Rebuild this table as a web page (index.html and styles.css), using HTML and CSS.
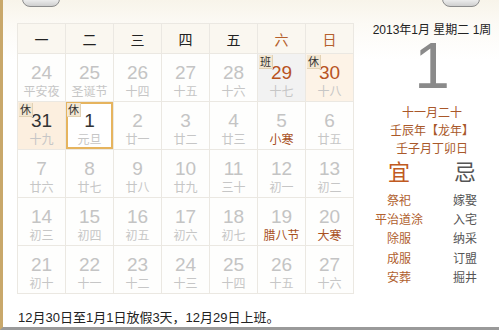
FILE: index.html
```html
<!DOCTYPE html>
<html lang="zh">
<head>
<meta charset="utf-8">
<link rel="stylesheet" href="styles.css">
</head>
<body>
<div class="sheet">
  <div class="ring ring-left"></div>
  <div class="ring ring-right"></div>
  <div class="main">
    <div class="cal">
      <div class="grid">
        <div class="wk">一</div><div class="wk">二</div><div class="wk">三</div><div class="wk">四</div><div class="wk">五</div><div class="wk we">六</div><div class="wk we">日</div>

        <div class="c"><b>24</b><i>平安夜</i></div>
        <div class="c"><b>25</b><i>圣诞节</i></div>
        <div class="c"><b>26</b><i>十四</i></div>
        <div class="c"><b>27</b><i>十五</i></div>
        <div class="c"><b>28</b><i>十六</i></div>
        <div class="c work"><span class="tag">班</span><b class="hot">29</b><i>十七</i></div>
        <div class="c rest"><span class="tag">休</span><b class="hot">30</b><i>十八</i></div>

        <div class="c rest2"><span class="tag">休</span><b class="cur">31</b><i>十九</i></div>
        <div class="c today"><span class="tag">休</span><b class="cur">1</b><i>元旦</i></div>
        <div class="c"><b>2</b><i>廿一</i></div>
        <div class="c"><b>3</b><i>廿二</i></div>
        <div class="c"><b>4</b><i>廿三</i></div>
        <div class="c"><b>5</b><i class="fest">小寒</i></div>
        <div class="c"><b>6</b><i>廿五</i></div>

        <div class="c"><b>7</b><i>廿六</i></div>
        <div class="c"><b>8</b><i>廿七</i></div>
        <div class="c"><b>9</b><i>廿八</i></div>
        <div class="c"><b>10</b><i>廿九</i></div>
        <div class="c"><b>11</b><i>三十</i></div>
        <div class="c"><b>12</b><i>初一</i></div>
        <div class="c"><b>13</b><i>初二</i></div>

        <div class="c"><b>14</b><i>初三</i></div>
        <div class="c"><b>15</b><i>初四</i></div>
        <div class="c"><b>16</b><i>初五</i></div>
        <div class="c"><b>17</b><i>初六</i></div>
        <div class="c"><b>18</b><i>初七</i></div>
        <div class="c"><b>19</b><i class="fest">腊八节</i></div>
        <div class="c"><b>20</b><i class="fest">大寒</i></div>

        <div class="c"><b>21</b><i>初十</i></div>
        <div class="c"><b>22</b><i>十一</i></div>
        <div class="c"><b>23</b><i>十二</i></div>
        <div class="c"><b>24</b><i>十三</i></div>
        <div class="c"><b>25</b><i>十四</i></div>
        <div class="c"><b>26</b><i>十五</i></div>
        <div class="c"><b>27</b><i>十六</i></div>
      </div>
    </div>
    <div class="side">
      <div class="ymd">2013年1月 星期二 1周</div>
      <div class="big">1</div>
      <div class="lunar">
        <div>十一月二十</div>
        <div>壬辰年【龙年】</div>
        <div>壬子月丁卯日</div>
      </div>
      <div class="yj">
        <div class="col">
          <div class="yi">宜</div>
          <div class="items good">
            <div>祭祀</div><div>平治道涂</div><div>除服</div><div>成服</div><div>安葬</div>
          </div>
        </div>
        <div class="col">
          <div class="ji">忌</div>
          <div class="items bad">
            <div>嫁娶</div><div>入宅</div><div>纳采</div><div>订盟</div><div>掘井</div>
          </div>
        </div>
      </div>
    </div>
  </div>
  <div class="foot">12月30日至1月1日放假3天，12月29日上班。</div>
</div>
</body>
</html>
```

FILE: styles.css
```css
html, body {
  margin: 0;
  padding: 0;
}
body {
  width: 499px;
  height: 330px;
  overflow: hidden;
  background: #ffffff;
  font-family: "Liberation Sans", "Noto Sans CJK SC", sans-serif;
}
.sheet {
  position: relative;
  box-sizing: border-box;
  width: 499px;
  height: 330px;
  border-left: 3px solid #c9a86b;
  border-bottom: 3px solid #9a9a9a;
  background: linear-gradient(#f8f4ea 0, #fcfaf5 24px, #ffffff 60px);
  padding: 18px 0 0 14px;
  display: flex;
  flex-direction: column;
}
.ring {
  position: absolute;
  top: -3px;
  width: 36px;
  height: 8px;
  border: 1px solid #8c8c8c;
  border-radius: 0 0 8px 8px;
  background: linear-gradient(#f6f6f6, #cfcfcf);
}
.ring-left { left: 19px; }
.ring-right { left: 439px; }
.main {
  display: flex;
}
.cal {
  padding-top: 5px;
}
.grid {
  display: grid;
  grid-template-columns: repeat(7, 47px);
  grid-template-rows: 29px repeat(5, 47px);
  gap: 1px;
  background: #ebe8e2;
  border: 1px solid #ebe8e2;
}
.wk {
  background: #faf7f0;
  display: flex;
  align-items: center;
  justify-content: center;
  font-family: "Noto Sans CJK SC", sans-serif;
  font-size: 14px;
  color: #222;
}
.wk.we {
  color: #b5602d;
}
.c {
  position: relative;
  background: #fefefd;
  display: flex;
  flex-direction: column;
  align-items: center;
  padding-top: 8px;
  box-sizing: border-box;
}
.c b {
  font-weight: normal;
  font-size: 19px;
  line-height: 22px;
  color: #c4c4c4;
}
.c i {
  font-style: normal;
  font-family: "Noto Sans CJK SC", sans-serif;
  font-size: 12px;
  line-height: 14px;
  color: #c6c6c6;
}
.c i.fest {
  color: #a8501e;
}
.c b.hot {
  color: #b8541f;
}
.c b.cur {
  color: #333;
}
.c.work {
  background: #f2f2f2;
}
.c.rest {
  background: #fdf3e7;
}
.c.rest2 {
  background: #fcefdf;
}
.c.today {
  background: #ffffff;
  box-shadow: inset 0 0 0 2px #e6b45e;
}
.tag {
  position: absolute;
  left: 1px;
  top: 1px;
  width: 13px;
  height: 13px;
  line-height: 13px;
  text-align: center;
  font-family: "Noto Sans CJK SC", sans-serif;
  font-size: 11px;
  color: #333;
  background: #f3e7d2;
  border-right: 1px solid #e2d2b4;
  border-bottom: 1px solid #e2d2b4;
}
.side {
  width: 132px;
  margin-left: 12px;
  display: flex;
  flex-direction: column;
  align-items: center;
  font-family: "Noto Sans CJK SC", sans-serif;
}
.ymd {
  margin-top: 5px;
  font-family: "Liberation Sans", "Noto Sans CJK SC", sans-serif;
  font-size: 12px;
  line-height: 15px;
  color: #222;
  white-space: nowrap;
}
.big {
  margin-top: 0;
  font-family: "Liberation Sans", sans-serif;
  font-size: 64px;
  line-height: 56px;
  color: #8a8a8a;
}
.lunar {
  margin-top: 9px;
  text-align: center;
  font-size: 12px;
  line-height: 18px;
  color: #a9582a;
}
.yj {
  display: flex;
  width: 132px;
}
.col {
  flex: 1;
  display: flex;
  flex-direction: column;
  align-items: center;
}
.yi, .ji {
  font-size: 22px;
  line-height: 26px;
  margin-top: 0;
}
.yi { color: #c05a22; }
.ji { color: #555; }
.items {
  margin-top: 7px;
  text-align: center;
  font-size: 12px;
  line-height: 19.2px;
}
.items.good { color: #b0602e; }
.items.bad { color: #555; }
.foot {
  margin-top: 15px;
  padding-left: 1px;
  font-family: "Liberation Sans", "Noto Sans CJK SC", sans-serif;
  font-size: 13px;
  line-height: 18px;
  color: #222;
}
```
